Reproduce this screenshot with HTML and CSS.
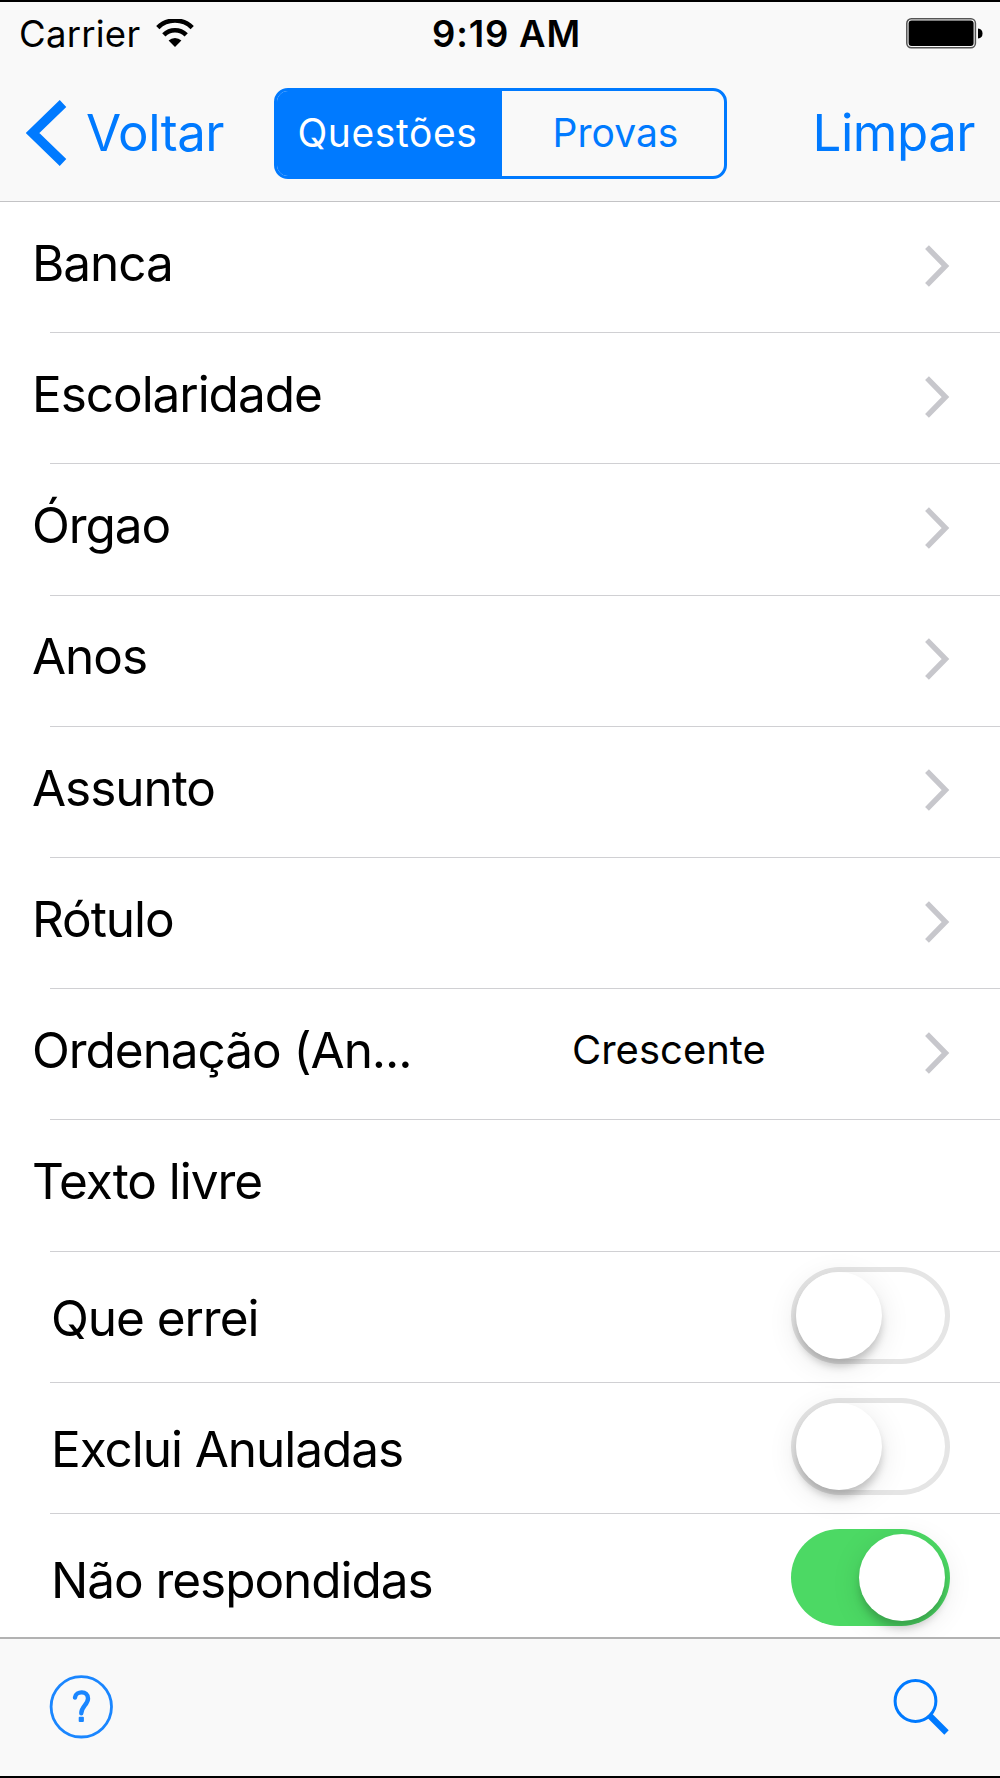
FILE: index.html
```html
<!DOCTYPE html>
<html lang="pt-BR">
<head>
    <meta charset="UTF-8">
    <meta name="viewport" content="width=device-width, initial-scale=1.0">
    <title>Filtro de Questões</title>
    <link rel="stylesheet" href="styles.css">
</head>
<body>
    <div class="screen">
        <header class="header">
            <div class="status-bar">
                <div class="status-left">
                    <span class="carrier">Carrier</span>
                    <svg class="wifi" width="38" height="28" viewBox="0 0 38 28">
                        <path d="M1.8 8.6 A24.5 24.5 0 0 1 36.2 8.6" fill="none" stroke="#000" stroke-width="4.6"/>
                        <path d="M7.8 15.8 A16 16 0 0 1 30.2 15.8" fill="none" stroke="#000" stroke-width="4.6"/>
                        <path d="M19 28 L12.6 21.6 A9.2 9.2 0 0 1 25.4 21.6 Z"/>
                    </svg>
                </div>
                <span class="time">9:19 AM</span>
                <svg class="battery" width="77" height="31" viewBox="0 0 77 31">
                    <rect x="0.8" y="0.8" width="68.6" height="29" rx="4.5" fill="none" stroke="#555" stroke-width="1.5"/>
                    <rect x="2.6" y="2.6" width="65" height="25.4" rx="3"/>
                    <path d="M72 10.5 Q76.5 11 76.5 15.5 Q76.5 20 72 20.5 Z"/>
                </svg>
            </div>
            <nav class="nav-bar">
                <a class="back" href="#">
                    <svg width="41" height="66" viewBox="0 0 41 66">
                        <path d="M37 3.5 L6.5 33 L37 62.5" fill="none" stroke="#007aff" stroke-width="9.4"/>
                    </svg>
                    <span>Voltar</span>
                </a>
                <div class="segmented">
                    <button class="segment active">Questões</button>
                    <button class="segment">Provas</button>
                </div>
                <a class="clear" href="#">Limpar</a>
            </nav>
        </header>

        <main class="list">
            <div class="row">
                <span class="label">Banca</span>
                <svg class="chevron" viewBox="0 0 25 42"><path d="M2 2.2 L20.5 21 L2 39.8"/></svg>
            </div>
            <div class="row">
                <span class="label">Escolaridade</span>
                <svg class="chevron" viewBox="0 0 25 42"><path d="M2 2.2 L20.5 21 L2 39.8"/></svg>
            </div>
            <div class="row">
                <span class="label">Órgao</span>
                <svg class="chevron" viewBox="0 0 25 42"><path d="M2 2.2 L20.5 21 L2 39.8"/></svg>
            </div>
            <div class="row">
                <span class="label">Anos</span>
                <svg class="chevron" viewBox="0 0 25 42"><path d="M2 2.2 L20.5 21 L2 39.8"/></svg>
            </div>
            <div class="row">
                <span class="label">Assunto</span>
                <svg class="chevron" viewBox="0 0 25 42"><path d="M2 2.2 L20.5 21 L2 39.8"/></svg>
            </div>
            <div class="row">
                <span class="label">Rótulo</span>
                <svg class="chevron" viewBox="0 0 25 42"><path d="M2 2.2 L20.5 21 L2 39.8"/></svg>
            </div>
            <div class="row">
                <span class="label">Ordenação (An...</span>
                <span class="value">Crescente</span>
                <svg class="chevron" viewBox="0 0 25 42"><path d="M2 2.2 L20.5 21 L2 39.8"/></svg>
            </div>
            <div class="row">
                <span class="label">Texto livre</span>
            </div>
            <div class="row switch-row">
                <span class="label">Que errei</span>
                <div class="switch"><div class="knob"></div></div>
            </div>
            <div class="row switch-row">
                <span class="label">Exclui Anuladas</span>
                <div class="switch"><div class="knob"></div></div>
            </div>
            <div class="row switch-row">
                <span class="label">Não respondidas</span>
                <div class="switch on"><div class="knob"></div></div>
            </div>
        </main>

        <footer class="toolbar">
            <svg width="64" height="64" viewBox="0 0 64 64">
                <circle cx="32.3" cy="31.8" r="30.2" fill="none" stroke="#1a86ff" stroke-width="2.8"/>
                <path d="M26 22.5 C27 15.5 39 15.5 39 23.5 C39 29.5 32.3 31.5 32.3 38.2" fill="none" stroke="#1a86ff" stroke-width="4.4" stroke-linecap="round"/>
                <rect x="29.7" y="41.8" width="5.2" height="5.2" rx="1" fill="#1a86ff"/>
            </svg>
            <svg width="56" height="56" viewBox="0 0 56 56">
                <circle cx="22.5" cy="22" r="20.4" fill="none" stroke="#007aff" stroke-width="3"/>
                <path d="M37 37 L53.5 53.5" stroke="#007aff" stroke-width="6.2"/>
            </svg>
        </footer>
    </div>
</body>
</html>
```
FILE: styles.css
```css
* {
    box-sizing: border-box;
}

body {
    margin: 0;
    background-color: #fff;
    font-family: 'Inter', 'Liberation Sans', sans-serif;
    color: #000;
}

.screen {
    display: flex;
    flex-direction: column;
    width: 1000px;
    height: 1778px;
    border-top: 2px solid #000;
    border-bottom: 2px solid #000;
    overflow: hidden;
}

/* Header */
.header {
    flex: none;
    height: 200px;
    background-color: #f9f9f9;
    border-bottom: 1px solid #c3c3c5;
}

.status-bar {
    display: grid;
    grid-template-columns: 1fr auto 1fr;
    align-items: center;
    height: 64px;
    padding: 0 17px 0 19px;
    font-size: 36.5px;
    line-height: 64px;
}

.status-left {
    display: flex;
    align-items: center;
    gap: 16px;
}

.carrier {
    letter-spacing: 0.25px;
}

.wifi,
.battery {
    margin-bottom: 2px;
}

.time {
    padding-left: 11px;
    font-weight: 600;
    letter-spacing: 0.8px;
}

.battery {
    justify-self: end;
}

.nav-bar {
    display: grid;
    grid-template-columns: 1fr 453px 1fr;
    align-items: center;
    height: 135px;
    padding: 0 25px 0 26px;
}

.back {
    display: flex;
    align-items: center;
    gap: 19px;
    padding-bottom: 2px;
}

.back,
.clear {
    color: #007aff;
    font-size: 51px;
    letter-spacing: -0.5px;
    line-height: 60px;
    text-decoration: none;
}

.clear {
    justify-self: end;
    padding-bottom: 2px;
}

.segmented {
    display: flex;
    height: 91px;
    border: 3px solid #007aff;
    border-radius: 14px;
    overflow: hidden;
}

.segment {
    flex: none;
    width: 222px;
    padding: 0 0 2px 5px;
    border: none;
    background-color: transparent;
    color: #007aff;
    font-family: inherit;
    font-size: 39px;
}

.segment.active {
    width: 225px;
    padding: 0 4px 2px 0;
    background-color: #007aff;
    color: #fff;
    letter-spacing: 0.6px;
}

/* Filter list */
.list {
    flex: 1;
    min-height: 0;
    overflow: hidden;
}

.row {
    display: flex;
    align-items: center;
    height: 131.2px;
    padding: 0 50px 0 32px;
    background: linear-gradient(#d0d0d3, #d0d0d3) 50px 100% / 100% 1px no-repeat;
}

.label {
    flex: 1;
    padding-bottom: 9.5px;
    font-size: 49.5px;
    letter-spacing: -1.05px;
    line-height: 60px;
    white-space: nowrap;
}

.value {
    width: 353px;
    padding-bottom: 10px;
    font-size: 40px;
    line-height: 60px;
}

.chevron {
    width: 25px;
    height: 42px;
    margin-bottom: 4px;
    fill: none;
    stroke: #c7c7cc;
    stroke-width: 5.4;
}

.switch-row {
    padding-left: 51px;
}

.switch-row .label {
    padding: 1px 0 0;
}

.switch {
    display: flex;
    width: 159px;
    height: 97px;
    margin-bottom: 3px;
    padding: 5px;
    border-radius: 49px;
    box-shadow: inset 0 0 0 5px #e5e5e5;
}

.switch.on {
    justify-content: flex-end;
    background-color: #4cd964;
    box-shadow: none;
}

.knob {
    width: 86px;
    height: 87px;
    border-radius: 50%;
    background-color: #fff;
    box-shadow: 0 8px 8px -1px rgba(0, 0, 0, 0.2), 0 6px 30px rgba(0, 0, 0, 0.1);
}

/* Bottom toolbar */
.toolbar {
    display: flex;
    flex: none;
    align-items: center;
    justify-content: space-between;
    height: 139px;
    padding: 0 51px 2px 49px;
    background-color: #f9f9f9;
    border-top: 2px solid #b2b2b2;
}
```
